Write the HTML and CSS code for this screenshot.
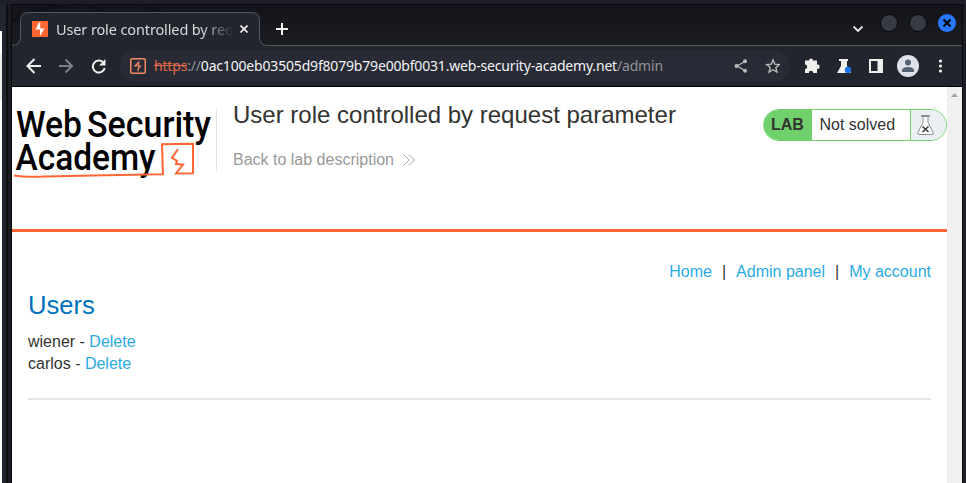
FILE: index.html
```
<!DOCTYPE html>
<html lang="en">
<head>
<meta charset="utf-8">
<title>User role controlled by request parameter</title>
<link rel="stylesheet" href="styles.css">
</head>
<body>
<div class="desktop">
  <div class="behind"></div>
  <div class="frame-left"></div>
  <div class="window">
    <div class="tabstrip">
      <svg class="tab-shape" width="950" height="42" viewBox="0 0 950 42">
        <g fill="none" stroke="#101116" stroke-width="3"><path d="M0 18Q24 3 60 0M75 0L91 9H150L125 0"/></g>
        <path d="M0 41.5Q8.500 41 8.500 33V16.500Q8.500 8.500 16.500 8.500H239.500Q247.500 8.500 247.500 16.500V33Q247.500 41.500 256 41.500V42H0Z" fill="#23252e"/>
        <path d="M0 41.500Q8.500 41 8.500 33V16.500Q8.500 8.500 16.500 8.500H239.500Q247.500 8.500 247.500 16.500V33Q247.500 41.500 256 41.500H950" fill="none" stroke="#55575d"/>
      </svg>
      <div class="tab">
        <svg width="16" height="16" viewBox="0 0 16 16"><path fill="#ff6633" d="M0 0h16v16H0z"/><path d="M7 1.500 3.500 8.500H8V15l4.500-7.500H8.500V1.500z" fill="#fff"/><path d="m9 1.500-.5 5M7.500 9.500l-1 5" stroke="#ff6633" stroke-width=".7"/></svg>
        <span class="tab-title">User role controlled by req</span>
        <svg class="tab-close" width="8" height="8" viewBox="0 0 8 8"><path d="m.5.5 7 7m0-7-7 7" stroke="#ededed" stroke-width="1.700"/></svg>
      </div>
      <svg class="plus" width="12" height="12" viewBox="0 0 12 12"><path d="M6 0v12M0 6h12" stroke="#f2f2ee" stroke-width="2"/></svg>
      <svg class="window-controls" width="106" height="20" viewBox="0 0 106 20">
        <path d="m1.500 13.500 4.500 4.500 4.500-4.500" fill="none" stroke="#e8e8e4" stroke-width="1.800"/>
        <circle cx="37" cy="10" r="8.500" fill="#363b46" stroke="#090a0d"/>
        <circle cx="66" cy="10" r="8.500" fill="#363b46" stroke="#090a0d"/>
        <circle cx="95" cy="10" r="9" fill="#2777ff"/>
        <path d="m91.500 6.500 7 7m0-7-7 7" stroke="#000" stroke-width="2.200"/>
      </svg>
    </div>
    <div class="toolbar">
      <svg class="nav" width="80" height="16" viewBox="0 0 80 16" fill="none" stroke-width="2">
        <path d="M15 8H2M8.500 1 1.500 8l7 7" stroke="#efefeb"/>
        <path d="M33 8h13M39.500 1.500 46 8l-6.500 6.500" stroke="#7e8087"/>
        <path d="M77 4.200A6 6 0 1 0 78.700 10" stroke="#efefeb"/>
        <path d="M79.500 1v6.500H73z" fill="#efefeb"/>
      </svg>
      <div class="address">
        <svg width="16" height="16" viewBox="0 0 16 16" fill="none" stroke="#f28b62"><rect x=".75" y=".75" width="14.500" height="14.500" rx="1.500" stroke-width="1.500"/><path d="M9.500 3.500 5 8h5.500L8 11v2.500M8.500 4v4" stroke-width="1.200"/></svg>
        <span class="url"><s>https</s><span class="dim">://</span>0ac100eb03505d9f8079b79e00bf0031.web-security-academy.net<span class="dim">/admin</span></span>
        <svg class="address-icons" width="46" height="16" viewBox="0 0 46 16" fill="none" stroke="#b9bab9">
          <path d="M11 3.500 3 8l8 4.500" stroke-width="1.300"/><g fill="#b9bab9" stroke="none"><circle cx="11" cy="3.300" r="2"/><circle cx="2.500" cy="8" r="2"/><circle cx="11" cy="12.700" r="2"/></g>
          <path d="m39 2 1.800 4.200 4.500.4-3.400 3 1 4.400-3.900-2.300-3.900 2.300 1-4.400-3.400-3 4.500-.4z" stroke-width="1.400"/>
        </svg>
      </div>
      <svg class="extensions" width="142" height="22" viewBox="0 0 142 22" fill="#efefec">
        <path d="M1 5.500h4a2 2 0 1 1 4 0h4v4a2.200 2.200 0 1 1 0 4.300V18H9.200a2.200 2.200 0 0 0-4.400 0H1v-4a2.200 2.200 0 0 0 0-4.400z"/>
        <path d="M35 4h9v2h-1v5l4 7H33l4-7V6h-2z"/><circle cx="44" cy="15" r="3.200" fill="#1a73e8"/>
        <path fill-rule="evenodd" d="M65 4h14v14H65zM67 6v10h6.500V6z"/>
        <circle cx="104" cy="11" r="11" fill="#dfe2e8"/><circle cx="104" cy="7.500" r="3" fill="#536174"/><path d="M98 17v-2q1-3 6-3t6 3v2z" fill="#536174"/>
        <circle cx="136.500" cy="6" r="1.600"/><circle cx="136.500" cy="11" r="1.600"/><circle cx="136.500" cy="16" r="1.600"/>
      </svg>
    </div>
    <div class="viewport">
      <main class="page">
        <header class="lab-header">
          <svg class="logo" width="204" height="84" viewBox="0 0 204 84">
            <g class="logo-text">
              <text x="4" y="37" textLength="66" lengthAdjust="spacingAndGlyphs">Web</text>
              <text x="75" y="37" textLength="124" lengthAdjust="spacingAndGlyphs">Security</text>
              <text x="3.500" y="70" textLength="140" lengthAdjust="spacingAndGlyphs">Academy</text>
            </g>
            <path d="M2 75.500q12 2 32 1 60-1.500 117-2.200l-1-30 31-.5v29.500l-17 .2 7-9-7-.5 1-3-5-3 6-9" fill="none" stroke="#ff6633" stroke-width="2"/>
          </svg>
          <div class="title-block">
            <h2>User role controlled by request parameter</h2>
            <a class="back" href="#">Back to lab description <svg width="12" height="12" viewBox="0 0 12 12"><path d="m.5.500 5.500 5.500-5.500 5.500M6 .5 11.500 6 6 11.500" fill="none" stroke="#999" stroke-width=".9"/></svg></a>
          </div>
          <div class="status"><b>LAB</b><span>Not solved</span>
            <div class="flask"><svg width="17" height="20" viewBox="0 0 17 20"><path d="M6 1.500v6L1 17.500v2h15v-2l-5-10v-6z" fill="#fff"/><path d="M4.500.5h8v1h-8zM6 1.500v6L.8 17.500q-.6 2 1 2h13.400q1.600 0 1-2L11 7.500v-6" fill="none" stroke="#8b8e91"/><path d="m5.500 11.500 6 5.500m0-5.500-6 5.500" stroke="#333332" stroke-width="1.500"/></svg></div>
          </div>
        </header>
        <section class="content">
          <nav class="links"><a href="#">Home</a><span>|</span><a href="#">Admin panel</a><span>|</span><a href="#">My account</a></nav>
          <h1>Users</h1>
          <div class="user">wiener - <a href="#">Delete</a></div>
          <div class="user">carlos - <a href="#">Delete</a></div>
          <hr>
        </section>
      </main>
      <div class="scrollbar"><svg width="7" height="4" viewBox="0 0 7 4"><path d="M0 4 3.500 0 7 4z" fill="#a3a3a3"/></svg></div>
    </div>
  </div>
  <div class="frame-right"></div>
</div>
</body>
</html>
```
FILE: styles.css
```
* { box-sizing: border-box; }
body { margin: 0; overflow: hidden; background: #1d1f27; font: 16px/22px "Liberation Sans", Arial, sans-serif; color: #333332; }
svg { display: block; flex: none; }
a { color: #29abe2; text-decoration: none; }
.desktop { display: grid; grid-template-columns: 2px 10px 950px 4px; height: 483px; border-top: 4px solid #1d1e27; }
.behind { background: linear-gradient(#23252e 0 27px, #fff 27px 50px, #eee 50px 96px, #fff 96px); }
.frame-left { background: linear-gradient(90deg, #23252e 0 4px, #0e0f13 4px 6px, #1b1c22 6px 9px, #08090b 9px); }
.frame-right { background: linear-gradient(90deg, #08090b 0 1px, #1d1e25 1px); }
.window { display: flex; flex-direction: column; min-width: 0; }
.tabstrip { position: relative; display: flex; align-items: flex-start; height: 42px; background: linear-gradient(#13151a, #1a1c21); border-top: 1px solid #08090b; }
.tab-shape { position: absolute; left: 0; top: -1px; }
.tab { position: relative; display: flex; align-items: center; width: 248px; height: 40px; padding: 8px 11px 0 20px; }
.tab-title { width: 176px; margin-left: 8px; overflow: hidden; white-space: nowrap; font: 14.5px/22px "Noto Sans", sans-serif; letter-spacing: -.12px; color: #d8d9d9; -webkit-mask-image: linear-gradient(90deg, #000 145px, transparent 178px); }
.tab-close { margin-left: 8px; }
.plus { position: relative; margin: 18px 0 0 16px; }
.window-controls { position: relative; margin: 8px 4px 0 auto; }
.toolbar { display: flex; align-items: center; height: 41px; background: #23252e; border-bottom: 1px solid #050507; }
.nav { margin-left: 14px; }
.address { display: flex; align-items: center; width: 670px; height: 32px; margin-left: 14px; padding: 0 10px; border-radius: 16px; background: #282a35; }
.url { margin-left: 8px; white-space: nowrap; font: 14px/22px "Noto Sans", sans-serif; letter-spacing: -.18px; color: #f1f3f4; }
.url s { color: #e0694b; }
.dim { color: #909399; }
.address-icons { margin-left: auto; }
.extensions { margin-left: 14px; }
.viewport { display: flex; flex: 1; background: #fff; }
.page { width: 935px; }
.lab-header { display: flex; height: 145px; border-bottom: 3px solid #ff6633; }
.logo { margin-top: 13px; }
.logo-text { font: 500 36.5px Roboto, sans-serif; fill: #000; }
.title-block { height: 62px; margin-top: 22px; padding-left: 16px; border-left: 1px solid #e2e2e2; }
.title-block h2 { margin: -9px 0 0; font-size: 24px; line-height: 30px; font-weight: 400; white-space: nowrap; }
.back { display: flex; align-items: center; gap: 9px; margin-top: 19px; color: #999; }
.status { display: flex; width: 184px; height: 32px; margin: 22px 0 0 auto; overflow: hidden; border: 1px solid #70d06c; border-radius: 16px; line-height: 30px; }
.status b { width: 48px; padding-left: 7px; background: #70d06c; }
.status span { width: 98px; padding-left: 7.5px; }
.flask { display: flex; flex: 1; align-items: center; padding-left: 6px; border-left: 1px solid #70d06c; background: #eaeff2; }
.content { padding: 29px 16px 0; }
.links { display: flex; justify-content: flex-end; gap: 10px; }
.content h1 { margin: 3px 0 7px; font-size: 25.6px; line-height: 38px; font-weight: 400; color: #0071bc; }
hr { height: 2px; margin: 23px 0 0; border: 0; background: #e5e5e5; }
.scrollbar { display: flex; justify-content: center; width: 15px; padding-top: 6px; background: #f0f0f0; }
```
